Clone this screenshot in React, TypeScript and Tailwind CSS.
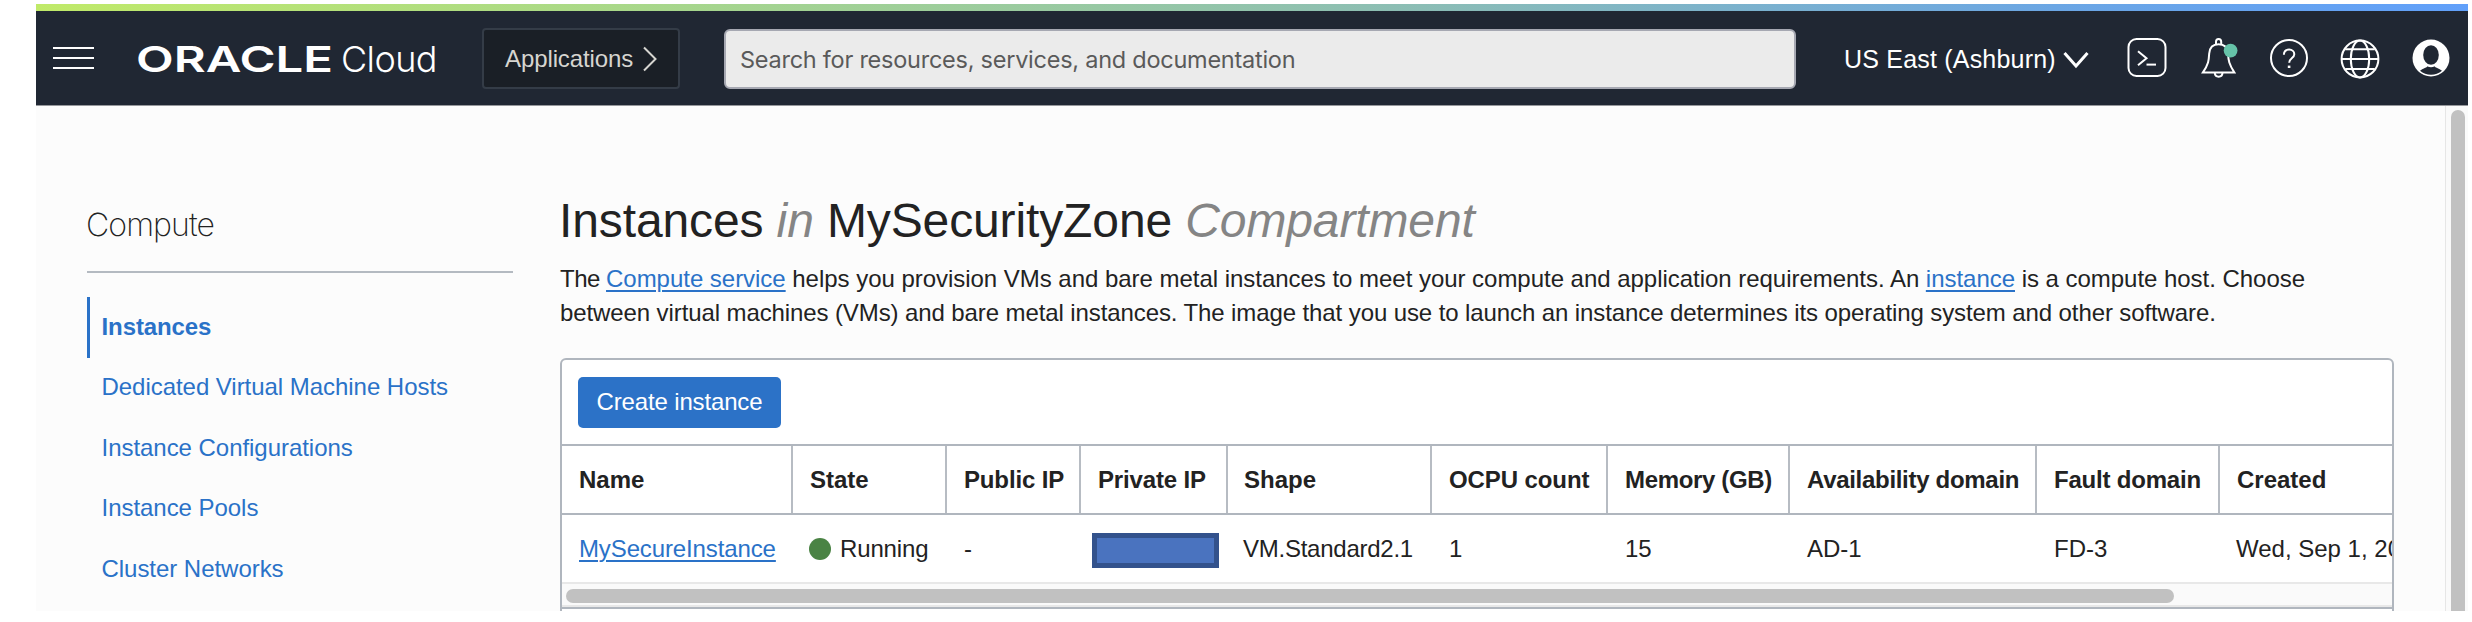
import type { ReactNode } from "react";

const navItems = [
  "Dedicated Virtual Machine Hosts",
  "Instance Configurations",
  "Instance Pools",
  "Cluster Networks",
];

type Column = { title: string; head: string; cell: ReactNode };

const columns: Column[] = [
  {
    title: "Name",
    head: "",
    cell: (
      <a className="tracking-[-0.12px] text-[#2a72c8] underline decoration-[2px] underline-offset-[3px]">
        MySecureInstance
      </a>
    ),
  },
  {
    title: "State",
    head: "",
    cell: (
      <span className="flex items-center">
        <span className="mr-[9px] -ml-[1px] size-[22px] rounded-full bg-[#4a8344]" />
        <span className="tracking-[-0.15px]">Running</span>
      </span>
    ),
  },
  { title: "Public IP", head: "tracking-[-0.15px]", cell: "-" },
  {
    title: "Private IP",
    head: "tracking-[-0.15px]",
    cell: (
      <span className="-ml-[6px] mt-[3px] block h-[35px] w-[127px] shrink-0 border-[5px] border-[#33528c] bg-[#4a73bf]" />
    ),
  },
  {
    title: "Shape",
    head: "-ml-[1px]",
    cell: <span className="-ml-[2px] tracking-[-0.25px]">VM.Standard2.1</span>,
  },
  { title: "OCPU count", head: "tracking-[-0.1px]", cell: "1" },
  { title: "Memory (GB)", head: "tracking-[-0.35px]", cell: "15" },
  { title: "Availability domain", head: "tracking-[-0.3px]", cell: "AD-1" },
  { title: "Fault domain", head: "tracking-[-0.2px]", cell: "FD-3" },
  { title: "Created", head: "", cell: <span className="-ml-[1px]">Wed, Sep 1, 2021</span> },
];

const gridCols =
  "grid grid-cols-[231px_154px_134px_147px_204px_176px_182px_247px_183px_172px]";

function Header() {
  return (
    <header className="flex h-[95px] shrink-0 items-center border-b border-[#96989c] bg-[#202733] text-white">
      <div className="ml-[17px] flex w-[41px] flex-col gap-[8px]">
        <span className="h-[2px] bg-white" />
        <span className="h-[2px] bg-white" />
        <span className="h-[2px] bg-white" />
      </div>

      <svg className="ml-[41px] h-[44px] w-[200px]" viewBox="0 0 200 44">
        <text
          x="1"
          y="36"
          textLength="197"
          lengthAdjust="spacingAndGlyphs"
          fill="#fff"
          className="text-[36px] font-semibold [font-family:Inter,sans-serif]"
        >
          ORACLE
        </text>
      </svg>
      <span className="ml-[6px] mt-[2px] w-[98px] text-[36px] leading-[40px] font-light tracking-[-0.6px] [font-family:Inter,sans-serif]">
        Cloud
      </span>

      <button className="ml-[43px] flex h-[61px] w-[198px] items-center rounded-[4px] border-2 border-[#343c47] bg-[#1a1f26] pl-[21px] text-[24px] tracking-[-0.1px] text-[#d6d5d0]">
        <span className="mt-[2px]">Applications</span>
        <svg className="ml-[9px] mt-[2px] h-[26px] w-[16px]" viewBox="0 0 16 26" fill="none" stroke="#d6d5d0" strokeWidth="2">
          <path d="M2 1.5 L13.5 13 L2 24.5" />
        </svg>
      </button>

      <div className="ml-[44px] mt-[2px] flex h-[60px] w-[1072px] items-center rounded-[6px] border-2 border-[#a6a8b2] bg-[#ebebeb] pt-[2px] pl-[14px] text-[23.5px] tracking-[-0.25px] text-[#5a5a5a] [font-family:Inter,sans-serif]">
        Search for resources, services, and documentation
      </div>

      <span className="ml-[48px] mt-[3px] w-[213px] whitespace-nowrap text-[25px] tracking-[0.2px]">
        US East (Ashburn)
      </span>
      <svg className="ml-[6px] mt-[3px] h-[18px] w-[26px]" viewBox="0 0 26 18" fill="none" stroke="#fff" strokeWidth="3">
        <path d="M1.5 2 L13 15 L24.5 2" />
      </svg>

      <svg className="ml-[38px] h-[40px] w-[40px]" viewBox="0 0 40 40" fill="none" stroke="#fff" strokeWidth="2">
        <rect x="1.5" y="1" width="37" height="37" rx="8" />
        <path d="M11 13.2 L19.5 20.2 L11 27.2" />
        <path d="M19.5 26.6 H29" />
      </svg>

      <svg className="ml-[34px] h-[42px] w-[38px]" viewBox="0 0 38 42" fill="none" stroke="#fff" strokeWidth="2">
        <path d="M15 7.6 V4.8 a2.6 2.9 0 0 1 5.2 0 V7.6" />
        <path d="M17.6 7.2 C11.4 7.2 8.6 11 8.2 16.5 C7.8 23.5 7.6 27 1.8 35.6 H33.4 C28 27 27.4 23.5 27 16.5 C26.6 11 23.8 7.2 17.6 7.2 Z" />
        <path d="M13.8 35.8 C14 41 21.3 41 21.5 35.8" />
        <circle cx="29.6" cy="13.6" r="6.9" fill="#66c3a9" stroke="none" />
      </svg>

      <svg className="ml-[30px] h-[40px] w-[40px]" viewBox="0 0 40 40" fill="none" stroke="#fff" strokeWidth="2">
        <circle cx="20" cy="20" r="18" />
        <path d="M14.9 16.8 C14.9 13.6 17 11.6 20.1 11.6 C23.2 11.6 25.3 13.5 25.3 16.2 C25.3 20 20.2 20 20.2 24.8" />
        <path d="M20.1 27.6 V30" strokeWidth="2.6" />
      </svg>

      <svg className="ml-[31px] h-[42px] w-[40px]" viewBox="0 0 40 42" fill="none" stroke="#fff" strokeWidth="2">
        <circle cx="20" cy="22" r="18.4" />
        <ellipse cx="20" cy="22" rx="9.2" ry="18.4" />
        <path d="M5.2 12.2 H34.8 M1.6 22 H38.4 M5.2 32 H34.8" />
      </svg>

      <svg className="ml-[31px] h-[40px] w-[40px]" viewBox="0 0 40 40">
        <circle cx="20" cy="20" r="18.5" fill="#fff" />
        <path d="M9 32.8 C12 30 15 30.2 16.4 28.2 H23.6 C25 30.2 28 30 31 32.8 A17.2 17.2 0 0 1 9 32.8 Z" fill="#202733" />
        <ellipse cx="20" cy="17.6" rx="9.2" ry="11.6" fill="#fff" />
        <ellipse cx="20" cy="17" rx="7.8" ry="9.8" fill="#202733" />
      </svg>
    </header>
  );
}

function Sidebar() {
  return (
    <nav className="ml-[51px] w-[426px] shrink-0">
      <h2 className="mt-[97px] border-b-2 border-[#b4bac1] pb-[24px] text-[32px] leading-[44px] font-extralight tracking-[-0.9px] text-[#222] [font-family:Inter,sans-serif]">
        <span className="-ml-[1px]">Compute</span>
      </h2>
      <div className="mt-[24px] flex h-[61px] items-center border-l-[3px] border-[#2a72c8] pb-[1px] pl-[11.5px] text-[24px] font-bold tracking-[-0.1px] text-[#2a72c8]">
        Instances
      </div>
      {navItems.map((item) => (
        <div key={item} className="flex h-[60.5px] items-center pb-[2px] pl-[14.5px] text-[24px] tracking-[-0.04px] text-[#2a72c8]">
          {item}
        </div>
      ))}
    </nav>
  );
}

function InstancesPanel() {
  return (
    <section className="mt-[28px] h-[300px] w-[1834px] overflow-hidden rounded-[6px] border-2 border-[#b0b6be] bg-white">
      <div className="flex h-[84px] items-center pl-[16px]">
        <button className="h-[51px] w-[203px] rounded-[5px] bg-[#2c72c7] text-[24px] tracking-[-0.15px] text-white">
          Create instance
        </button>
      </div>
      <div className={`${gridCols} h-[71px] border-y-2 border-[#b0b6be] font-bold`}>
        {columns.map((c) => (
          <div
            key={c.title}
            className="flex items-center whitespace-nowrap border-r-2 border-[#b7bcc3] pl-[17px] last:border-r-0"
          >
            <span className={c.head}>{c.title}</span>
          </div>
        ))}
      </div>
      <div className={`${gridCols} h-[67px]`}>
        {columns.map((c) => (
          <div key={c.title} className="flex items-center whitespace-nowrap pl-[17px]">
            {c.cell}
          </div>
        ))}
      </div>
      <div className="h-[25px] border-y-2 border-[#e8e8e8] bg-[#fafafa] pl-[4px] pt-[5px]">
        <div className="h-[14px] w-[1608px] rounded-full bg-[#c1c1c1]" />
      </div>
      <div className="h-[2px] bg-[#b0b6be]" />
    </section>
  );
}

export default function App() {
  return (
    <div className="h-[622px] w-[2472px] overflow-hidden bg-white pt-[4px] pl-[36px] text-[24px] text-[#222] [font-family:'Liberation_Sans',Arial,sans-serif]">
      <div className="flex h-[607px] w-[2432px] flex-col overflow-hidden bg-[#fcfcfc]">
        <div className="h-[7px] shrink-0 bg-[linear-gradient(90deg,#c0ea69_0%,#a5d58e_28%,#8bbdb5_57%,#6ba6e4_83%,#61a0fa_100%)]" />
        <Header />
        <div className="flex min-h-0 flex-1 overflow-hidden">
          <Sidebar />
          <main className="ml-[47px] flex-1">
            <h1 className="-ml-[1px] mt-[85px] h-[60px] whitespace-nowrap text-[48px] leading-[60px] tracking-[-0.12px]">
              Instances <em className="text-[#858585]">in</em> MySecurityZone{" "}
              <em className="text-[#858585]">Compartment</em>
            </h1>
            <p className="mt-[11px] whitespace-nowrap leading-[34px]">
              <span className="tracking-[-0.03px]">
                <span className="tracking-[-0.5px]">The </span>
                <a className="text-[#2a72c8] underline decoration-[2px] underline-offset-[3px]">Compute service</a>{" "}
                helps you provision VMs and bare metal instances to meet your compute and application requirements. An{" "}
                <a className="text-[#2a72c8] underline decoration-[2px] underline-offset-[3px]">instance</a> is a
                compute host. Choose
              </span>
              <br />
              <span className="tracking-[-0.1px]">
                between virtual machines (VMs) and bare metal instances. The image that you use to launch an instance
                determines its operating system and other software.
              </span>
            </p>
            <InstancesPanel />
          </main>
          <div className="w-[23px] shrink-0 border-l border-[#e6e6e6] bg-[#fafafa] pt-[4px] pl-[5px]">
            <div className="h-[560px] w-[14px] rounded-full bg-[#c1c1c1]" />
          </div>
        </div>
      </div>
    </div>
  );
}
